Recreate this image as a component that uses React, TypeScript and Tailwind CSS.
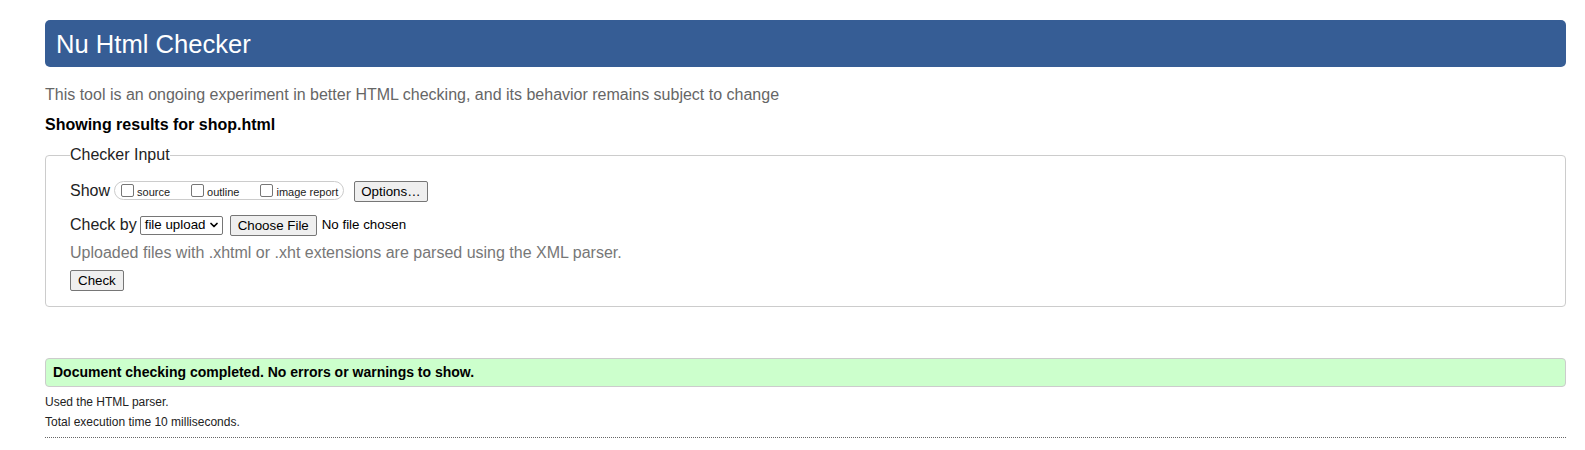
import { ChevronDown } from "lucide-react";

type BoxProps = {
  label: string;
  last?: boolean;
};

function ShowBox({ label, last }: BoxProps) {
  return (
    <label className={`flex items-center gap-[3px] ${last ? "" : "mr-[21px]"}`}>
      <input
        type="checkbox"
        className="appearance-none w-[13px] h-[13px] border border-[#767676] rounded-[2px] bg-white"
      />
      <span className="text-[11px] leading-[13px] mt-[3px] text-[#222]">{label}</span>
    </label>
  );
}

function Btn({ children, className = "px-[6px]" }: { children: React.ReactNode; className?: string }) {
  return (
    <button
      className={`h-[21px] border border-[#767676] rounded-[2px] bg-[#efefef] text-[13.33px] leading-[15px] text-black ${className}`}
    >
      {children}
    </button>
  );
}

export default function App() {
  return (
    <div className="min-h-[450px] bg-white pl-[45px] pr-[19px] pt-[20px] font-['Liberation_Sans',Arial,sans-serif] text-[#222]">
      <div className="h-[47px] rounded-[5px] bg-[#365d95] px-[11px] flex items-center">
        <h1 className="text-[25.6px] leading-[30px] text-white">Nu Html Checker</h1>
      </div>

      <p className="mt-[19px] text-[16px] leading-[18px] text-[#666]">
        This tool is an ongoing experiment in better HTML checking, and its behavior remains subject to change
      </p>
      <p className="mt-[12px] text-[16px] leading-[18px] font-bold text-black">Showing results for shop.html</p>

      <fieldset className="mt-[12px] border border-[#ccc] rounded-[4px] pl-[24px] pr-4 pb-[14px]">
        <legend className="text-[16px] leading-[18px] px-0">Checker Input</legend>

        <div className="flex items-center mt-[16px] h-[21px]">
          <span className="text-[16px] leading-[18px] mr-[4px]">Show</span>
          <div className="flex items-center h-[19px] border border-[#ccc] rounded-full pl-[6px] pr-[5px]">
            <ShowBox label="source" />
            <ShowBox label="outline" />
            <ShowBox label="image report" last />
          </div>
          <div className="ml-[10px]">
            <Btn>Options…</Btn>
          </div>
        </div>

        <div className="flex items-center mt-[14px] h-[20px]">
          <span className="text-[16px] leading-[18px] mr-[3px]">Check by</span>
          <div className="flex items-center h-[19px] w-[83px] border border-[#767676] rounded-[2px] pl-[4px] pr-[2px] text-[13.33px] text-black">
            <span className="flex-1">file upload</span>
            <ChevronDown size={12} strokeWidth={3.5} />
          </div>
          <div className="ml-[7px]">
            <Btn className="w-[87px]">Choose File</Btn>
          </div>
          <span className="ml-[5px] text-[13.33px] text-black">No file chosen</span>
        </div>

        <p className="mt-[9px] text-[16px] leading-[18px] text-[#777]">
          Uploaded files with .xhtml or .xht extensions are parsed using the XML parser.
        </p>

        <div className="mt-[6px]">
          <Btn className="px-[7px]">Check</Btn>
        </div>
      </fieldset>

      <div className="mt-[51px] h-[29px] border border-[#ccc] rounded-[4px] bg-[#ccffcc] pl-[7px] flex items-center">
        <p className="text-[14px] font-bold text-black">Document checking completed. No errors or warnings to show.</p>
      </div>

      <div className="border-b border-dotted border-[#666] pb-[8px]">
        <p className="mt-[8px] text-[12px] leading-[14px]">Used the HTML parser.</p>
        <p className="mt-[6px] text-[12px] leading-[14px]">Total execution time 10 milliseconds.</p>
      </div>
    </div>
  );
}
